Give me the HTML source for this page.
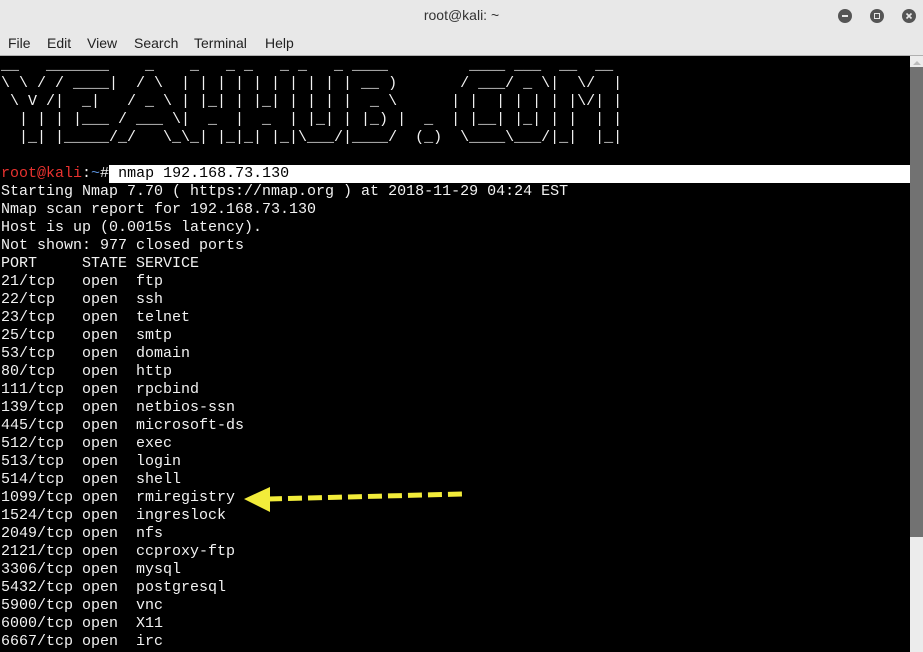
<!DOCTYPE html>
<html><head><style>
body{margin:0;width:923px;height:652px;overflow:hidden;background:#000;font-family:"Liberation Sans",sans-serif;position:relative}
#title{position:absolute;left:0;top:0;width:923px;height:30px;background:#e8e8e8;text-align:center;font-size:14px;line-height:30px;color:#333}
#menu{position:absolute;left:0;top:30px;width:923px;height:25px;background:#e8e8e8;border-bottom:1px solid #b0b0b0;font-size:14px;color:#222}
#menu span{position:absolute;top:5px}
.btn{position:absolute;top:9px;width:14px;height:14px;border-radius:50%;background:#555}
#term{position:absolute;left:1px;top:57px;width:909px;height:595px;background:#000}
pre{margin:0;font-family:"Liberation Mono",monospace;font-size:15px;line-height:18px;color:#f2f2f2;white-space:pre}
#sb{position:absolute;left:910px;top:56px;width:13px;height:596px;background:#ececec}
.r{color:#e8322f}.b{color:#5a8fd8}
.hl{background:#fff;color:#000;display:inline-block;width:801px}
</style></head><body>
<div id="title">root@kali: ~</div>
<div class="btn" style="left:838px"><div style="position:absolute;left:4px;top:6px;width:6px;height:2px;background:#e8e8e8"></div></div>
<div class="btn" style="left:870px"><div style="position:absolute;left:4px;top:4px;width:4px;height:4px;border:1px solid #e8e8e8"></div></div>
<div class="btn" style="left:902px"><svg width="14" height="14" style="position:absolute;left:0;top:0"><path d="M4.5 4.5L9.5 9.5M9.5 4.5L4.5 9.5" stroke="#e8e8e8" stroke-width="1.6"/></svg></div>
<div id="menu"><span style="left:8px">File</span><span style="left:47px">Edit</span><span style="left:87px">View</span><span style="left:134px">Search</span><span style="left:194px">Terminal</span><span style="left:265px">Help</span></div>
<div id="term"><pre>__   _______    _    _   _ _   _ _   _ ____         ____ ___  __  __ 
\ \ / / ____|  / \  | | | | | | | | | | __ )       / ___/ _ \|  \/  |
 \ V /|  _|   / _ \ | |_| | |_| | | | |  _ \      | |  | | | | |\/| |
  | | | |___ / ___ \|  _  |  _  | |_| | |_) |  _  | |__| |_| | |  | |
  |_| |_____/_/   \_\_| |_|_| |_|\___/|____/  (_)  \____\___/|_|  |_|

<span class="r">root@kali</span>:<span class="b">~</span>#<span class="hl"> nmap 192.168.73.130</span>
Starting Nmap 7.70 ( https://nmap.org ) at 2018-11-29 04:24 EST
Nmap scan report for 192.168.73.130
Host is up (0.0015s latency).
Not shown: 977 closed ports
PORT     STATE SERVICE
21/tcp   open  ftp
22/tcp   open  ssh
23/tcp   open  telnet
25/tcp   open  smtp
53/tcp   open  domain
80/tcp   open  http
111/tcp  open  rpcbind
139/tcp  open  netbios-ssn
445/tcp  open  microsoft-ds
512/tcp  open  exec
513/tcp  open  login
514/tcp  open  shell
1099/tcp open  rmiregistry
1524/tcp open  ingreslock
2049/tcp open  nfs
2121/tcp open  ccproxy-ftp
3306/tcp open  mysql
5432/tcp open  postgresql
5900/tcp open  vnc
6000/tcp open  X11
6667/tcp open  irc</pre></div>
<div id="sb"><div style="position:absolute;left:3px;top:5px;width:0;height:0;border-left:4px solid transparent;border-right:4px solid transparent;border-bottom:4px solid #bbb"></div><div style="position:absolute;left:0;top:11px;width:13px;height:470px;background:#727272"></div></div>
<svg style="position:absolute;left:0;top:0" width="923" height="652">
<polygon points="244,499 270,487 270,512" fill="#f2ec3a"/>
<line x1="268" y1="499" x2="463" y2="494" stroke="#f2ec3a" stroke-width="5" stroke-dasharray="14,6"/>
</svg>
</body></html>
